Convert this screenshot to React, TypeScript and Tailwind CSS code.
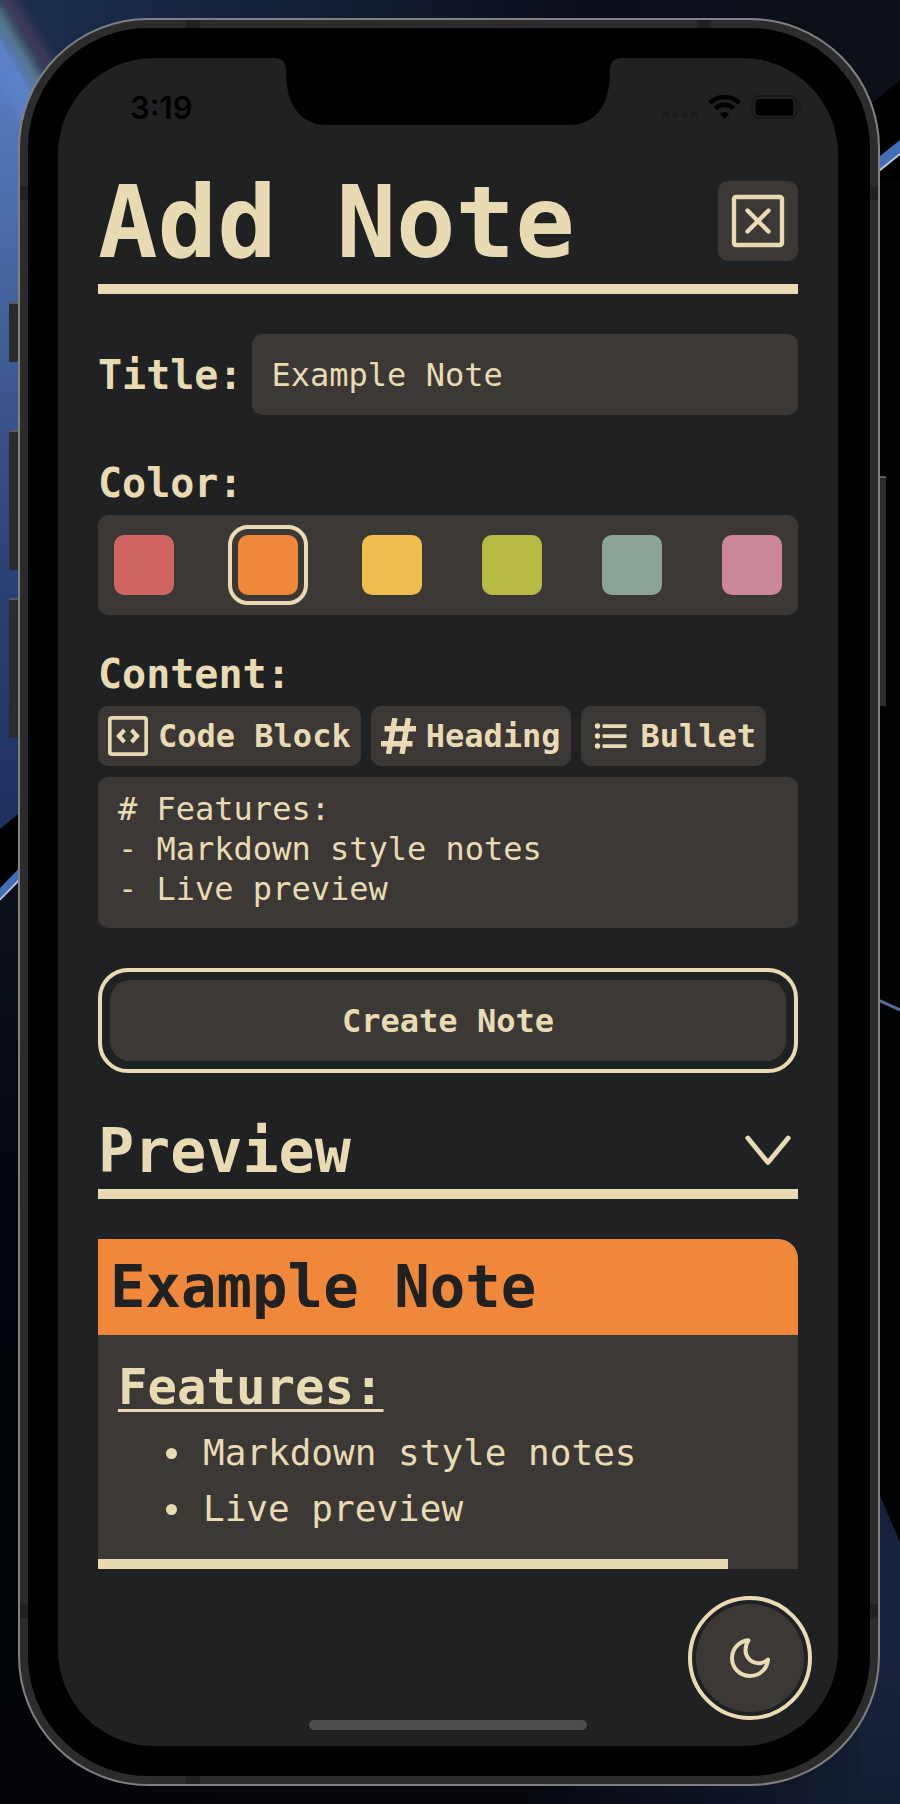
import React, { useState } from "react";

const MONO = "font-['DejaVu_Sans_Mono','Liberation_Mono',monospace]";

const COLORS = [
  { name: "Red", fill: "bg-[#d16561]" },
  { name: "Orange", fill: "bg-[#f0883c]" },
  { name: "Yellow", fill: "bg-[#f0be50]" },
  { name: "Green", fill: "bg-[#b8ba46]" },
  { name: "Aqua", fill: "bg-[#8ca498]" },
  { name: "Pink", fill: "bg-[#c98798]" },
];

function Wallpaper() {
  return (
    <svg
      aria-hidden="true"
      className="absolute inset-0 h-full w-full"
      viewBox="0 0 900 1804"
      preserveAspectRatio="none"
    >
      <defs>
        <linearGradient id="top" x1="0" y1="0" x2="1" y2="0">
          <stop offset="0" stopColor="#1c2f50" />
          <stop offset="0.3" stopColor="#14213a" />
          <stop offset="0.65" stopColor="#0a0e18" />
          <stop offset="1" stopColor="#0b1019" />
        </linearGradient>
        <linearGradient id="blue" x1="0" y1="0" x2="0" y2="1">
          <stop offset="0" stopColor="#5b80c8" />
          <stop offset="0.3" stopColor="#46659f" />
          <stop offset="0.65" stopColor="#2c4377" />
          <stop offset="1" stopColor="#1d3060" />
        </linearGradient>
        <linearGradient id="low" x1="0" y1="0" x2="0" y2="1">
          <stop offset="0" stopColor="#0c131c" />
          <stop offset="0.4" stopColor="#03060c" />
          <stop offset="1" stopColor="#020508" />
        </linearGradient>
        <linearGradient id="corner" x1="0" y1="0" x2="0" y2="1">
          <stop offset="0" stopColor="#16213b" />
          <stop offset="0.6" stopColor="#18233d" />
          <stop offset="1" stopColor="#131c31" />
        </linearGradient>
        <linearGradient id="floor" x1="0" y1="0" x2="1" y2="0">
          <stop offset="0" stopColor="#030509" />
          <stop offset="0.6" stopColor="#05070c" />
          <stop offset="1" stopColor="#131c31" />
        </linearGradient>
        <filter id="soft" x="-50%" y="-50%" width="200%" height="200%">
          <feGaussianBlur stdDeviation="5" />
        </filter>
      </defs>
      <rect width="900" height="1804" fill="#010203" />
      <rect width="900" height="160" fill="url(#top)" />
      <path d="M900 80 L870 105 V180 H900 Z" fill="#000" />
      <path d="M0 40 L70 160 V830 H0 Z" fill="url(#blue)" />
      <g filter="url(#soft)">
        <path d="M-20 0 L60 130 L40 150 L-20 50 Z" fill="#5b80c8" />
        <path d="M-8 5 L60 118" stroke="#5c7f93" strokeWidth="12" />
        <path d="M0 -12 L66 92" stroke="#433b5c" strokeWidth="12" />
      </g>
      <path d="M0 829 L60 780 V860 L0 890 Z" fill="#000" />
      <path d="M0 888 L60 826 V842 L0 900 Z" fill="#3f6db8" />
      <path d="M0 900 L60 838" stroke="#b9c8dc" strokeWidth="2" />
      <path d="M0 901 L60 840 V1804 H0 Z" fill="url(#low)" />
      <path d="M875 160 L900 140 V154 L875 174 Z" fill="#426fb8" />
      <path d="M875 174 L900 154" stroke="#b9c8dc" strokeWidth="2" />
      <path d="M878 1000 L900 1010" stroke="#566f9c" strokeWidth="3" />
      <path d="M860 1450 L900 1542 V1804 H860 Z" fill="url(#corner)" />
      <rect y="1700" width="860" height="104" fill="url(#floor)" />
    </svg>
  );
}

function Notch() {
  return (
    <svg
      aria-hidden="true"
      className="absolute left-1/2 top-0 -translate-x-1/2"
      width="346"
      height="68"
      viewBox="0 0 346 68"
      fill="#000"
    >
      <path d="M0 0 C8 0 11 5 11 13 C11 43 22 67 53 67 H293 C324 67 335 43 335 13 C335 5 338 0 346 0 Z" />
    </svg>
  );
}

function StatusIcons() {
  return (
    <svg aria-hidden="true" width="135" height="26" viewBox="0 0 135 26" overflow="visible">
      <g fill="#1a1b1b">
        <rect x="0" y="18" width="6" height="6" rx="1.500" />
        <rect x="9.500" y="18" width="6" height="6" rx="1.500" />
        <rect x="19" y="18" width="6" height="6" rx="1.500" />
        <rect x="28" y="18" width="6" height="6" rx="1.500" />
      </g>
      <g fill="none" stroke="#000" strokeWidth="4.600">
        <path d="M46.800 9.200 C54.500 0.900 68.500 0.900 76.200 9.200" />
        <path d="M52.300 14.600 C57.300 9.600 65.700 9.600 70.700 14.600" />
      </g>
      <path d="M61.500 24.800 L57 20.200 C59.500 17.700 63.500 17.700 66 20.200 Z" fill="#000" />
      <rect x="89.500" y="2" width="44" height="22" rx="6.500" fill="none" stroke="#161717" strokeWidth="2" />
      <rect x="92.500" y="5" width="38" height="16.500" rx="3.500" fill="#000" />
      <path d="M136 9.500 C139.200 10.500 139.200 15.500 136 16.500 Z" fill="#161717" />
    </svg>
  );
}

function CloseIcon() {
  return (
    <svg aria-hidden="true" width="60" height="60" viewBox="0 0 60 60" fill="none" stroke="currentColor" strokeWidth="4.400">
      <rect x="6" y="6" width="48" height="48" rx="2" />
      <path d="M19.500 19.500 L40.500 40.500 M40.500 19.500 L19.500 40.500" strokeLinecap="round" />
    </svg>
  );
}

function CodeIcon() {
  return (
    <svg aria-hidden="true" width="40" height="40" viewBox="0 0 40 40" fill="none" stroke="currentColor">
      <rect x="1.800" y="1.800" width="36.400" height="36.400" rx="2" strokeWidth="3.700" />
      <path d="M16.500 14 L10.800 20 L16.500 26 M23.500 14 L29.200 20 L23.500 26" strokeWidth="4" />
    </svg>
  );
}

function HashIcon() {
  return (
    <svg aria-hidden="true" width="35" height="36" viewBox="0 0 35 36" fill="none" stroke="currentColor" strokeWidth="5.400">
      <path d="M3.500 10.700 H35 M0 25.700 H31.500" />
      <path d="M13.900 0 L7.500 36 M27.400 0 L21 36" />
    </svg>
  );
}

function BulletIcon() {
  return (
    <svg aria-hidden="true" width="40" height="40" viewBox="0 0 40 40" fill="currentColor">
      <circle cx="6.500" cy="10" r="2.700" />
      <circle cx="6.500" cy="20" r="2.700" />
      <circle cx="6.500" cy="30" r="2.700" />
      <rect x="11.500" y="8.200" width="24" height="3.700" rx="1" />
      <rect x="11.500" y="18.200" width="24" height="3.700" rx="1" />
      <rect x="11.500" y="28.200" width="24" height="3.700" rx="1" />
    </svg>
  );
}

function MoonIcon() {
  return (
    <svg aria-hidden="true" width="40" height="40" viewBox="0 0 40 40" fill="none" stroke="currentColor" strokeWidth="4" strokeLinejoin="round">
      <path d="M18.500 2.300 C9.500 3 2 10.500 2 20.200 C2 30 10 38 20 38 C29.800 38 37.300 30.500 38 21.500 C32 27 23 26 18.500 20.500 C14.500 15.500 14.500 8 18.500 2.300 Z" />
    </svg>
  );
}

function ChevronIcon() {
  return (
    <svg aria-hidden="true" width="46" height="32" viewBox="0 0 46 32" fill="none" stroke="currentColor" strokeWidth="4.800" strokeLinecap="round" strokeLinejoin="round">
      <path d="M2.800 3 L23 27.500 L43.200 3" />
    </svg>
  );
}

function ToolButton({ icon, label }: { icon: React.ReactNode; label: string }) {
  return (
    <button type="button" className="flex h-[60px] items-center gap-[10px] rounded-[10px] bg-[#3c3836] px-[10px] text-[32px] leading-10 font-bold">
      {icon}
      <span>{label}</span>
    </button>
  );
}

function SideButtons() {
  const side = "absolute -left-[11px] w-[9px] rounded-l-[2px] border-t-2 border-[#5a5a5a] bg-[#2c2c2c]";
  return (
    <div aria-hidden="true">
      <div className={side + " top-[282px] h-[60px]"} />
      <div className={side + " top-[410px] h-[140px]"} />
      <div className={side + " top-[578px] h-[140px]"} />
      <div className="absolute -right-[8px] top-[456px] h-[230px] w-[6px] border-t-2 border-[#5a5a5a] bg-[#2c2c2c]" />
    </div>
  );
}

function AntennaBands() {
  return (
    <div aria-hidden="true">
      <div className="absolute left-[166px] top-0 h-2 w-[14px] bg-[#212121]" />
      <div className="absolute right-[167px] top-0 h-2 w-[14px] bg-[#212121]" />
      <div className="absolute bottom-0 left-[166px] h-2 w-[14px] bg-[#212121]" />
      <div className="absolute left-0 top-[166px] h-[14px] w-2 bg-[#212121]" />
      <div className="absolute right-0 top-[166px] h-[14px] w-2 bg-[#212121]" />
      <div className="absolute bottom-[166px] left-0 h-[14px] w-2 bg-[#212121]" />
      <div className="absolute right-0 bottom-[166px] h-[14px] w-2 bg-[#212121]" />
    </div>
  );
}

export default function App() {
  const [title, setTitle] = useState("Example Note");
  const [color, setColor] = useState(1);
  const [content, setContent] = useState("# Features:\n- Markdown style notes\n- Live preview");

  return (
    <div className={"relative min-h-screen overflow-hidden py-[18px] pr-5 pl-[18px] text-[#e8dbb4] " + MONO}>
      <Wallpaper />
      <div className="relative rounded-[130px] border-2 border-[#808080] bg-[#2c2c2c] p-2">
        <SideButtons />
        <AntennaBands />
        <div className="relative rounded-[120px] bg-black py-[30px] pr-8 pl-[30px]">
          <div className="relative overflow-hidden rounded-[96px] bg-[#202122] px-10 pb-[177px]">
            <Notch />
            <div className="flex h-[123px] items-start justify-between pt-9 pl-8">
              <span className="font-['Inter',sans-serif] text-[31px] leading-[28px] font-semibold text-black">3:19</span>
              <StatusIcons />
            </div>

            <main>
              <header className="flex items-center justify-between border-b-[10px] border-[#e8dbb4] pb-[23px]">
                <h1 className="pt-1 text-[99px] leading-[76px] font-bold whitespace-nowrap">Add Note</h1>
                <button type="button" aria-label="Close" className="flex size-20 items-center justify-center rounded-[10px] bg-[#3c3836]">
                  <CloseIcon />
                </button>
              </header>

              <form onSubmit={(e) => e.preventDefault()}>
                <div className="mt-10 flex items-center gap-[9px]">
                  <label htmlFor="title" className="text-[40px] leading-[50px] font-bold">Title:</label>
                  <input
                    id="title"
                    value={title}
                    onChange={(e) => setTitle(e.target.value)}
                    className="h-[81px] min-w-0 flex-1 rounded-[10px] bg-[#3c3836] px-5 text-[32px] outline-none"
                  />
                </div>

                <fieldset className="mt-10">
                  <legend className="pb-1 text-[40px] leading-[56px] font-bold">Color:</legend>
                  <div className="flex h-[100px] items-center justify-between rounded-[10px] bg-[#3c3836] px-4">
                    {COLORS.map((c, i) => (
                      <input
                        key={c.name}
                        type="radio"
                        name="color"
                        aria-label={c.name}
                        checked={color === i}
                        onChange={() => setColor(i)}
                        className={
                          "size-[60px] appearance-none rounded-[10px] checked:size-[68px] checked:rounded-[14px] checked:border-4 checked:border-[#3c3836] checked:outline-4 checked:outline-offset-2 checked:outline-[#e8dbb4] " +
                          c.fill
                        }
                      />
                    ))}
                  </div>
                </fieldset>

                <div className="mt-[31px]">
                  <label htmlFor="content" className="block pb-1 text-[40px] leading-[56px] font-bold">Content:</label>
                  <div className="flex gap-[10px]">
                    <ToolButton icon={<CodeIcon />} label="Code Block" />
                    <ToolButton icon={<HashIcon />} label="Heading" />
                    <ToolButton icon={<BulletIcon />} label="Bullet" />
                  </div>
                  <textarea
                    id="content"
                    rows={3}
                    value={content}
                    onChange={(e) => setContent(e.target.value)}
                    className="mt-[11px] block h-[151px] w-full resize-none overflow-hidden rounded-[10px] bg-[#3c3836] px-5 py-3 text-[32px] leading-10 outline-none"
                  />
                </div>

                <div className="mt-10 rounded-[30px] border-4 border-[#e8dbb4] p-2">
                  <button type="submit" className="h-[81px] w-full rounded-[20px] bg-[#3c3836] text-[32px] leading-10 font-bold">
                    Create Note
                  </button>
                </div>
              </form>

              <section>
                <div className="mt-[50px] flex items-center justify-between border-b-[10px] border-[#e8dbb4] pr-[7px] pb-[10px]">
                  <h2 className="text-[60px] leading-[56px] font-bold">Preview</h2>
                  <button type="button" aria-label="Toggle preview">
                    <ChevronIcon />
                  </button>
                </div>

                <article className="mt-10 overflow-hidden rounded-tr-[20px] bg-[#3c3836]">
                  <h3 className={"px-3 text-[59px] leading-[96px] font-bold text-[#202122] " + COLORS[color].fill}>{title}</h3>
                  <div className="h-[224px] px-5 pt-6">
                    <h4 className="text-[49px] leading-[58px] font-bold underline decoration-[3px] underline-offset-[5px]">Features:</h4>
                    <ul className="mt-2 text-[36px] leading-[56px]">
                      {["Markdown style notes", "Live preview"].map((item) => (
                        <li key={item} className="flex items-center pl-12">
                          <span aria-hidden="true" className="mr-[26px] size-[11px] rounded-full bg-[#e8dbb4]" />
                          {item}
                        </li>
                      ))}
                    </ul>
                  </div>
                  <div className="h-[10px] w-9/10 bg-[#e8dbb4]" />
                </article>
              </section>
            </main>

            <div className="absolute right-[26px] bottom-[26px] rounded-full border-4 border-[#e8dbb4] p-1">
              <button type="button" aria-label="Dark mode" className="flex size-[108px] items-center justify-center rounded-full bg-[#3c3836]">
                <MoonIcon />
              </button>
            </div>
            <div className="absolute bottom-4 left-1/2 h-[10px] w-[278px] -translate-x-1/2 rounded-full bg-[#4c4c4c]" />
          </div>
        </div>
      </div>
    </div>
  );
}
